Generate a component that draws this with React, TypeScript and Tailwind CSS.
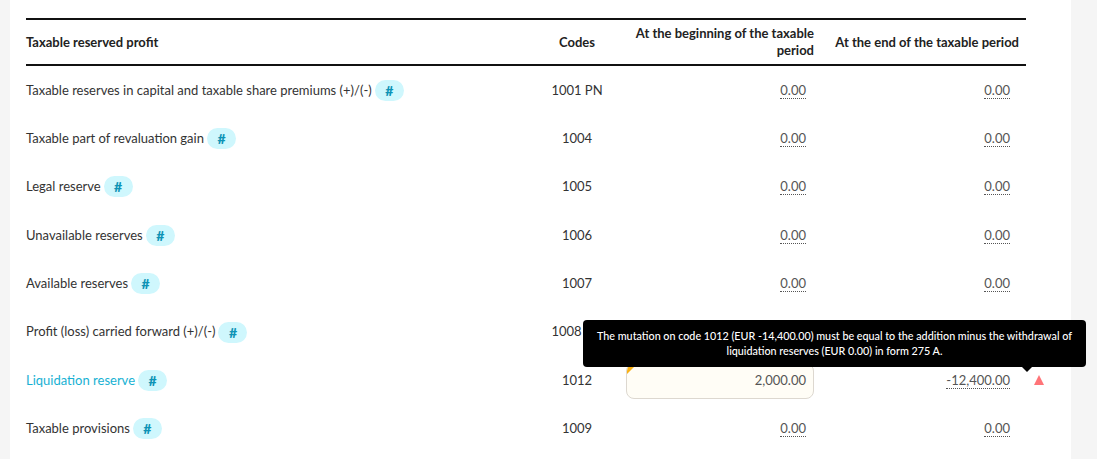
const rows = [
  { label: 'Taxable reserves in capital and taxable share premiums (+)/(-)', code: '1001 PN' },
  { label: 'Taxable part of revaluation gain', code: '1004' },
  { label: 'Legal reserve', code: '1005' },
  { label: 'Unavailable reserves', code: '1006' },
  { label: 'Available reserves', code: '1007' },
  { label: 'Profit (loss) carried forward (+)/(-)', code: '1008 PN' },
  { label: 'Liquidation reserve', code: '1012', active: true },
  { label: 'Taxable provisions', code: '1009' },
];

function Amount({ value }: { value: string }) {
  return (
    <span className="border-b border-dotted border-[#555] text-[13px] leading-[13px] text-[#555]">{value}</span>
  );
}

function HashBadge() {
  return (
    <span className="ml-[3px] inline-flex h-[21px] w-[29px] items-center justify-center rounded-full bg-[#cff7fd] text-[14px] font-black text-[#0e93b5]">
      #
    </span>
  );
}

export default function App() {
  return (
    <div className="h-[459px] overflow-hidden bg-[#f5f5f5] font-['Lato',sans-serif] text-[#222]">
      <div className="relative mx-[10px] mr-[26px] h-[459px] bg-white px-4 pt-[18px]">
        <table className="w-[1000px] table-fixed border-collapse">
          <colgroup>
            <col className="w-[509px]" />
            <col className="w-[84px]" />
            <col className="w-[202px]" />
            <col className="w-[205px]" />
          </colgroup>
          <thead>
            <tr className="h-[46px] border-y-2 border-[#111] text-[13px] leading-[17px] font-bold text-[#222]">
              <th className="text-left">Taxable reserved profit</th>
              <th className="text-center">Codes</th>
              <th className="px-[7px] text-right">At the beginning of the taxable period</th>
              <th className="px-[7px] text-right whitespace-nowrap">At the end of the taxable period</th>
            </tr>
          </thead>
          <tbody>
            {rows.map((row) => (
              <tr key={row.code} className="h-[48.4px] text-[13px]">
                <td className="pt-[2px]">
                  <span className="flex items-center">
                    <span className={row.active ? 'text-[#17b1d3]' : 'text-[#333]'}>{row.label}</span>
                    <HashBadge />
                  </span>
                </td>
                <td className="pt-[2px] text-center whitespace-nowrap text-[#333]">{row.code}</td>
                <td className="px-[7px] pt-[2px] text-right">
                  {row.active ? (
                    <div className="relative flex h-9 items-center justify-end overflow-hidden rounded-lg border border-[#ddd8d0] bg-[#fffdf6] pr-[7px] text-[13px] text-[#555]">
                      <span className="absolute top-0 left-0 size-0 border-t-[10px] border-r-[10px] border-t-[#f9b115] border-r-transparent" />
                      2,000.00
                    </div>
                  ) : (
                    <span className="pr-2">
                      <Amount value="0.00" />
                    </span>
                  )}
                </td>
                <td className="pt-[2px] pr-4 pl-[7px] text-right">
                  <Amount value={row.active ? '-12,400.00' : '0.00'} />
                </td>
              </tr>
            ))}
            <tr className="h-[48.4px]">
              <td>
                <span className="flex items-center pl-[270px]">
                  <HashBadge />
                </span>
              </td>
            </tr>
          </tbody>
        </table>

        {/* Error marker next to the amount */}
        <span className="absolute top-[375px] left-[1024px] size-0 border-x-[5.5px] border-b-[10px] border-x-transparent border-b-[#ff7478]" />

        {/* Tooltip */}
        <div className="absolute top-[320px] left-[573px] w-[503px] rounded-[4px] bg-black px-2 pt-2 pb-[9px] text-center text-[10.75px] leading-[15px] font-medium text-white">
          The mutation on code 1012 (EUR -14,400.00) must be equal to the addition minus the withdrawal of liquidation reserves (EUR 0.00) in form 275 A.
          <span className="absolute top-full left-[439px] size-0 border-x-[5px] border-t-[5px] border-x-transparent border-t-black" />
        </div>
      </div>
    </div>
  );
}
